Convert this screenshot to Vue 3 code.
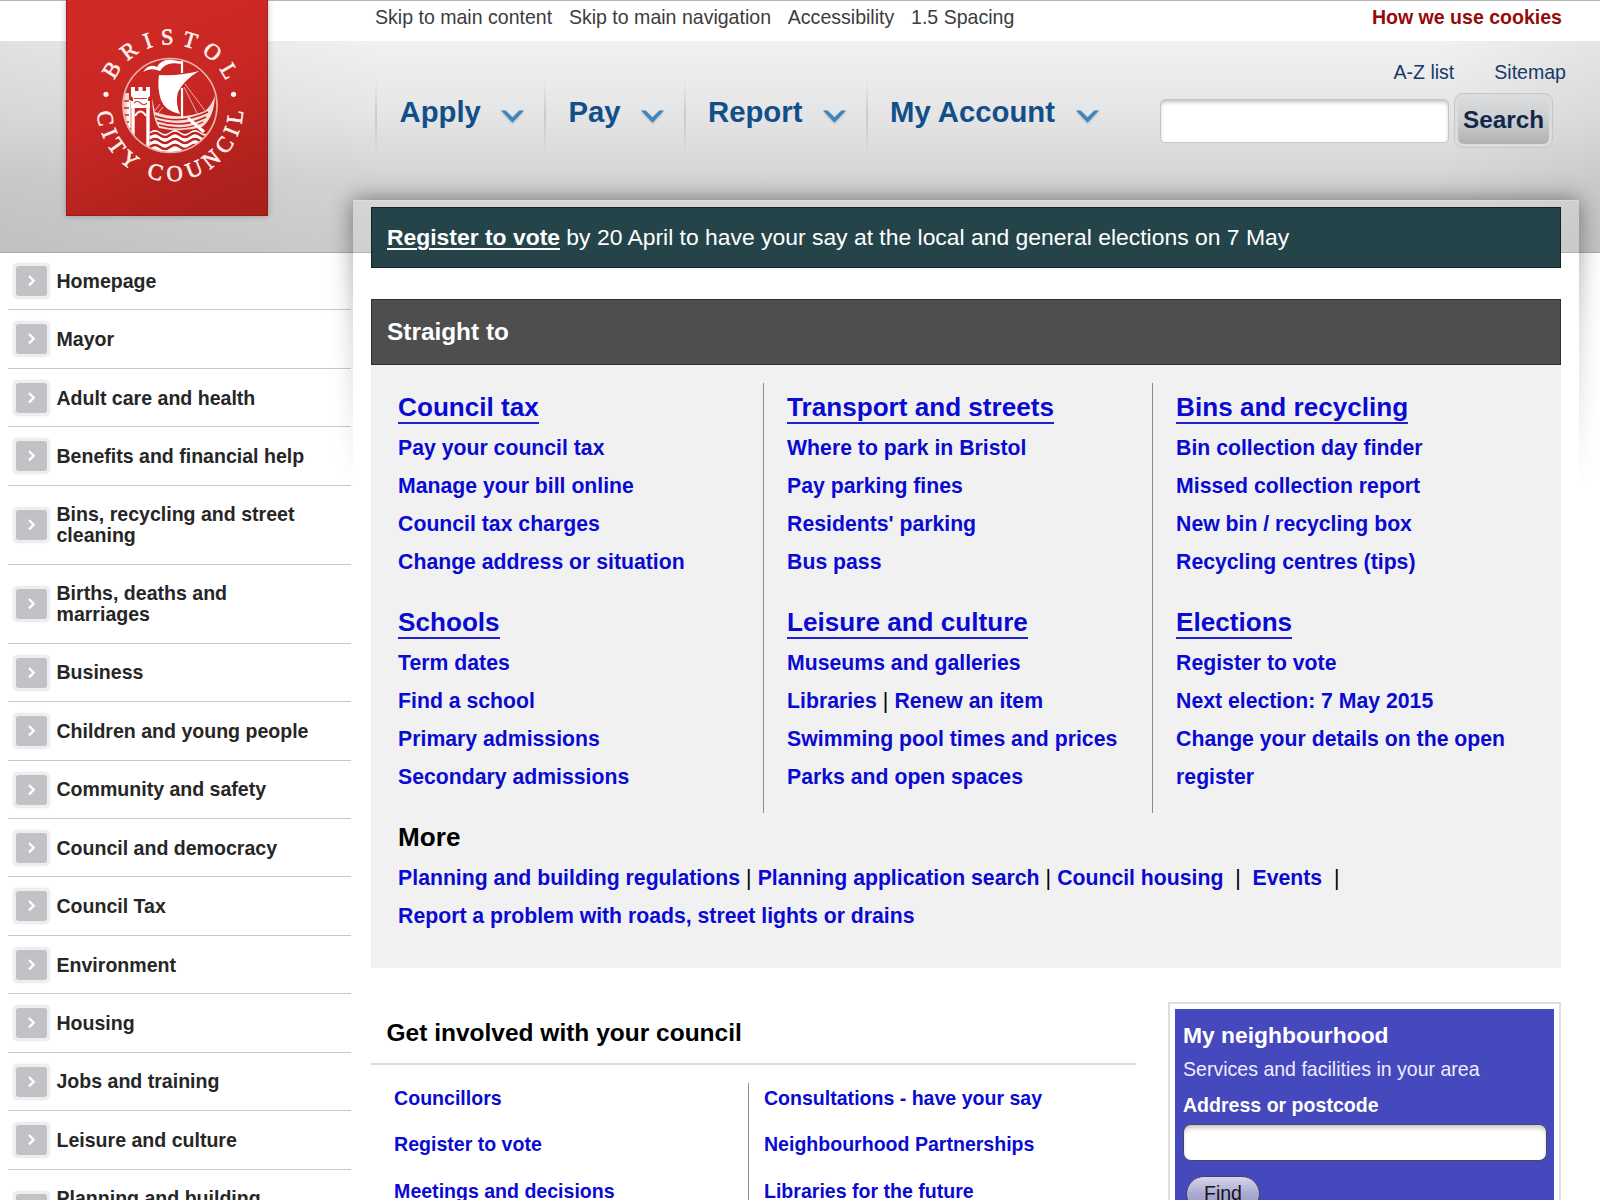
<script setup>
const skipLinks = ['Skip to main content', 'Skip to main navigation', 'Accessibility', '1.5 Spacing']

const tabs = [
  { label: 'Apply', width: 169 },
  { label: 'Pay', width: 139.5 },
  { label: 'Report', width: 182 },
  { label: 'My Account', width: 253.5 },
]

const sections = [
  ['Homepage'],
  ['Mayor'],
  ['Adult care and health'],
  ['Benefits and financial help'],
  ['Bins, recycling and street', 'cleaning'],
  ['Births, deaths and', 'marriages'],
  ['Business'],
  ['Children and young people'],
  ['Community and safety'],
  ['Council and democracy'],
  ['Council Tax'],
  ['Environment'],
  ['Housing'],
  ['Jobs and training'],
  ['Leisure and culture'],
  ['Planning and building', 'regulations'],
]

const columns = [
  [
    { title: 'Council tax', rows: [['Pay your council tax'], ['Manage your bill online'], ['Council tax charges'], ['Change address or situation']] },
    { title: 'Schools', rows: [['Term dates'], ['Find a school'], ['Primary admissions'], ['Secondary admissions']] },
  ],
  [
    { title: 'Transport and streets', rows: [['Where to park in Bristol'], ['Pay parking fines'], ["Residents' parking"], ['Bus pass']] },
    { title: 'Leisure and culture', rows: [['Museums and galleries'], ['Libraries', 'Renew an item'], ['Swimming pool times and prices'], ['Parks and open spaces']] },
  ],
  [
    { title: 'Bins and recycling', rows: [['Bin collection day finder'], ['Missed collection report'], ['New bin / recycling box'], ['Recycling centres (tips)']] },
    { title: 'Elections', rows: [['Register to vote'], ['Next election: 7 May 2015'], ['Change your details on the open register']] },
  ],
]

const involved = [
  ['Councillors', 'Register to vote', 'Meetings and decisions'],
  ['Consultations - have your say', 'Neighbourhood Partnerships', 'Libraries for the future'],
]
</script>

<template>
  <div class="page">
    <header class="header">
      <div class="topbar">
        <nav class="skip">
          <a v-for="s in skipLinks" :key="s">{{ s }}</a>
        </nav>
        <a class="cookies">How we use cookies</a>
      </div>
      <div class="masthead">
        <nav class="tabs">
          <a v-for="t in tabs" :key="t.label" class="tab" :style="{ width: t.width + 'px' }">
            <span>{{ t.label }}</span>
            <svg class="chev" width="27" height="18" viewBox="0 0 27 18">
              <path d="M2 2.500H6.600L13.500 9.300L20.400 2.500H25L13.500 14.800Z" fill="#3d86c0" />
            </svg>
          </a>
        </nav>
        <div class="tools">
          <div class="meta"><a>A-Z list</a><a>Sitemap</a></div>
          <form class="search" @submit.prevent>
            <input type="text" aria-label="Search text" />
            <button type="submit"><span>Search</span></button>
          </form>
        </div>
      </div>
      <a class="logo">
        <svg width="202" height="216" viewBox="66 0 202 216">
          <defs>
            <linearGradient id="red" x1="0.3" y1="0" x2="0.7" y2="1">
              <stop offset="0" stop-color="#d02a26" />
              <stop offset="0.45" stop-color="#c82724" />
              <stop offset="1" stop-color="#aa201b" />
            </linearGradient>
            <path id="arcTop" d="M109 105.500A61 61 0 0 1 231 105.500" />
            <path id="arcBottom" d="M97 108A73 73 0 0 0 243 108" />
            <clipPath id="disc"><circle cx="170" cy="105.500" r="46.500" /></clipPath>
          </defs>
          <rect x="66" y="0" width="202" height="216" fill="url(#red)" />
          <path d="M66.500 0V215.500H267.500V0" fill="none" stroke="#8e1512" stroke-opacity="0.6" />
          <g fill="#fff2ef" font-family="'Liberation Serif', serif" font-size="22.500" stroke="#fff2ef" stroke-width="0.600">
            <text><textPath href="#arcTop" startOffset="26" textLength="140">BRISTOL</textPath></text>
            <text><textPath href="#arcBottom" startOffset="4" textLength="222">CITY COUNCIL</textPath></text>
          </g>
          <circle cx="106" cy="94.300" r="2.600" fill="#fff2ef" />
          <circle cx="233.500" cy="94.300" r="2.600" fill="#fff2ef" />
          <g clip-path="url(#disc)">
            <path d="M123 93H129V146H123Z" fill="#f5d5d0" />
            <path d="M131 87h4v4h3.500v-4h4v4h3.500v-4h4v9l-2 2v3h2v7h-19v-7h2v-3l-2-2z" fill="#fff" />
            <path d="M134 98.500H147M134 103q3-3.500 6.500 0t6.500 0" fill="none" stroke="#cf4640" stroke-width="1.200" />
            <path d="M133 107V148M148 107V150M129 100V140" stroke="#fff" stroke-width="3.400" />
            <path d="M135 116q5.500-9 11 0" fill="none" stroke="#fff" stroke-width="2" />
            <path d="M123 101H129M123 108H129M123 115H129M123 122H129M123 129H131" stroke="#c52622" stroke-width="1.300" />
            <path d="M150 132q5-4 10 0t10 0 10 0 10 0 10 0 10 0 10 0V156H150Z" fill="#fff" />
            <path v-for="y in [135, 141, 147]" :key="y" :d="`M150 ${y}q5-4 10 0t10 0 10 0 10 0 10 0 10 0`" fill="none" stroke="#bd2420" stroke-width="2.300" />
            <path d="M152 98Q153 120 159 128Q182 133 202 127Q214 118 215 96Q211 106 205 111Q180 121 155 112Z" fill="#f7dcd8" />
            <path d="M155 116Q180 125 208 112M157 120.500Q182 129 206 117M159 125Q184 132 203 122" fill="none" stroke="#c02520" stroke-width="1.400" />
          </g>
          <path d="M159 75Q181 76 199 71Q184 80 178 92Q175 103 180 114Q165 111 161 100Q157 88 159 75Z" fill="#fff" />
          <path d="M143 72Q149 63 157 67Q161 59.500 170 59.500L181 61.500V64Q166 60.500 160 71Q150 67 143 72Z" fill="#fff" />
          <path d="M182 61V73M182 88V118" stroke="#fff" stroke-width="2.200" />
          <path d="M185 84L206 112M184 87L198 115M160 104L154 112M163 107L158 113" stroke="#eea9a3" stroke-width="1" />
          <path d="M188 118L204 132" stroke="#fff" stroke-width="3" />
          <circle cx="170" cy="105.500" r="47" fill="none" stroke="#eeb3ad" stroke-width="1.700" />
        </svg>
      </a>
    </header>

    <div class="body">
      <aside class="sidebar">
        <a v-for="(s, i) in sections" :key="i" class="side-item">
          <span class="side-icon">
            <svg width="31" height="30" viewBox="0 0 31 30">
              <path d="M13 10l4.700 4.700L13 19.400" fill="none" stroke="#fff" stroke-width="2.300" />
            </svg>
          </span>
          <span class="side-text"><span v-for="l in s" :key="l">{{ l }}</span></span>
        </a>
      </aside>

      <main class="panel">
        <div class="shade"></div>
        <div class="veil"></div>
        <div class="banner"><p><b>Register to vote</b> by 20 April to have your say at the local and general elections on 7 May</p></div>

        <section class="straight">
          <h2>Straight to</h2>
          <div class="straight-body">
            <div class="cols">
              <div v-for="(col, c) in columns" :key="c" class="col">
                <div v-for="g in col" :key="g.title" class="group">
                  <h3><a>{{ g.title }}</a></h3>
                  <p v-for="(row, r) in g.rows" :key="r">
                    <template v-for="(l, k) in row" :key="l"><i v-if="k">|</i><a>{{ l }}</a></template>
                  </p>
                </div>
              </div>
            </div>
            <div class="more">
              <h3>More</h3>
              <p>
                <a>Planning and building regulations</a><i>|</i><a>Planning application search</a><i>|</i><a>Council housing</a><i class="wide">|</i><a>Events</a><i class="wide">|</i>
              </p>
              <p><a>Report a problem with roads, street lights or drains</a></p>
            </div>
          </div>
        </section>

        <div class="lower">
          <section class="involved">
            <h2>Get involved with your council</h2>
            <div class="inv-cols">
              <div v-for="(col, c) in involved" :key="c" class="inv-col">
                <a v-for="l in col" :key="l">{{ l }}</a>
              </div>
            </div>
          </section>
          <section class="hood">
            <div class="hood-inner">
              <h2>My neighbourhood</h2>
              <p>Services and facilities in your area</p>
              <label for="postcode">Address or postcode</label>
              <input id="postcode" type="text" />
              <button type="button">Find</button>
            </div>
          </section>
        </div>
      </main>
    </div>
  </div>
</template>

<style>
body {
  overflow: hidden;
  background: #fff;
}
</style>

<style scoped>
* {
  box-sizing: border-box;
  margin: 0;
}
.page {
  width: 1600px;
  height: 1200px;
  overflow: hidden;
  font: 19.56px 'Liberation Sans', Arial, sans-serif;
  color: #000;
}
a {
  white-space: nowrap;
}

/* header */
.header {
  position: relative;
  height: 253px;
  border-top: 1px solid #b5b5b5;
}
.topbar {
  display: flex;
  justify-content: space-between;
  height: 40px;
  padding: 5px 38px 0 375px;
  line-height: 22px;
  color: #3c3c3c;
}
.skip {
  display: flex;
  gap: 16.8px;
}
.cookies {
  font-weight: bold;
  color: #960a0a;
}
.masthead {
  display: flex;
  justify-content: space-between;
  height: 212px;
  border-bottom: 1px solid #ababab;
  background:
    linear-gradient(90deg, rgba(120, 120, 120, 0.13), rgba(120, 120, 120, 0) 24%, rgba(120, 120, 120, 0) 90%, rgba(120, 120, 120, 0.1)),
    linear-gradient(#f1f1f1, #e5e5e5 35%, #d4d4d4 65%, #cbcbcb);
}
.tabs {
  display: flex;
  height: 74px;
  margin: 39px 0 0 375px;
}
.tab {
  display: flex;
  justify-content: space-between;
  align-items: center;
  padding: 0 18px 10px 22.5px;
  font-size: 29.3px;
  font-weight: bold;
  color: #114f8a;
  border-left: 2px solid;
  border-image: linear-gradient(rgba(170, 170, 170, 0), rgba(170, 170, 170, 0.45), rgba(170, 170, 170, 0)) 1;
}
.chev {
  margin-top: 9px;
  filter: drop-shadow(0 1px 1px rgba(0, 0, 0, 0.2));
}
.tools {
  display: flex;
  flex-direction: column;
  width: 440px;
  padding-top: 20px;
}
.meta {
  display: flex;
  justify-content: flex-end;
  gap: 40px;
  padding-right: 34px;
  line-height: 22px;
  color: #173a6b;
}
.search {
  display: flex;
  align-items: flex-start;
  gap: 5px;
  margin-top: 10px;
}
.search input {
  width: 289px;
  height: 44px;
  margin-top: 6px;
  border: 1px solid #c4c4c4;
  border-radius: 5px;
  background: #fff;
  box-shadow: inset 0 3px 4px -1px #bdbdbd;
}
.search button {
  width: 99px;
  height: 55px;
  padding: 4px 3px;
  border: 1px solid #c6c6c6;
  border-radius: 9px;
  background: #dcdcdc;
}
.search button span {
  display: block;
  height: 46px;
  border-radius: 6px;
  background: linear-gradient(#d9dadb, #cdcfd0 45%, #b0b2b4);
  font: bold 24.3px/44px 'Liberation Sans', Arial, sans-serif;
  color: #12284b;
}
.logo {
  position: absolute;
  left: 66px;
  top: -1px;
  height: 216px;
  box-shadow: 0 0 6px rgba(0, 0, 0, 0.25);
}
.logo svg {
  display: block;
}

/* body */
.body {
  display: flex;
}
.sidebar {
  width: 343px;
  margin: -1px 2px 0 8px;
}
.side-item {
  display: flex;
  align-items: center;
  padding: 18.7px 0 18.15px 5px;
  border-bottom: 1px solid #c8c8c8;
  font-weight: bold;
  line-height: 20.6px;
  color: #262626;
}
.side-icon {
  flex: none;
  width: 37px;
  height: 36px;
  margin: -8px 6.5px -8px 0;
  padding: 3px;
  border-radius: 5px;
  background: #eeeeef;
  box-shadow: 0 0 2px #e6e6e6;
}
.side-icon svg {
  display: block;
  border-radius: 3px;
  background: #c1c2c5;
}
.side-text span {
  display: block;
}
.panel {
  position: relative;
  width: 1226px;
  height: 1000px;
  margin-top: -53px;
  padding: 7px 18px 0 17.5px;
}
.shade {
  position: absolute;
  inset: -40px -40px auto;
  height: 330px;
  overflow: hidden;
  mask: linear-gradient(#000 15%, rgba(0, 0, 0, 0.45) 50%, transparent);
}
.shade::before {
  content: '';
  position: absolute;
  inset: 40px 40px -100px;
  box-shadow: 0 0 22px rgba(0, 0, 0, 0.48);
}
.veil {
  position: absolute;
  inset: 0 0 auto;
  height: 53px;
  background: rgba(255, 255, 255, 0.1);
  border-top: 1px solid rgba(255, 255, 255, 0.2);
}
.banner {
  position: relative;
  height: 61px;
  padding-left: 15.5px;
  border: 1px solid #112327;
  background: #24444a;
  color: #fff;
  font-size: 22.9px;
  line-height: 58px;
}
.banner b {
  text-decoration: underline;
  text-decoration-thickness: 2px;
  text-underline-offset: 3px;
}
.straight {
  position: relative;
  margin-top: 31px;
  background: #f1f1f1;
}
.straight h2 {
  height: 66px;
  padding-left: 15.5px;
  background: #4e4e4e;
  border: 1px solid #2f2f2f;
  color: #fff;
  font-size: 24.4px;
  line-height: 64px;
}
.straight-body {
  height: 603px;
  padding: 18px 0 0 4px;
}
.cols {
  display: flex;
}
.col {
  width: 389px;
  height: 430px;
  padding-left: 23.6px;
}
.col + .col {
  box-shadow: -1px 0 #8b8b8b;
}
.group {
  height: 215px;
}
h3 {
  height: 46px;
  padding-top: 8.5px;
  font-size: 26.1px;
  line-height: 30px;
}
h3 a {
  display: inline-block;
  height: 32px;
  border-bottom: 2px solid #2020d0;
}
.group a,
.more a,
.inv-col a {
  color: #0a0ad2;
}
.group p,
.more p {
  font-size: 21.23px;
  font-weight: bold;
  line-height: 38px;
}
.group p a {
  white-space: normal;
}
i {
  margin: 0 6.1px;
  font-style: normal;
  font-weight: normal;
}
i.wide {
  margin: 0 11.8px;
}
.more {
  padding-left: 23.6px;
}
.lower {
  display: flex;
  justify-content: space-between;
}
.involved {
  width: 765px;
  padding-top: 34px;
}
.involved h2 {
  height: 63px;
  padding-left: 16px;
  border-bottom: 2px solid #dcdcdc;
  font-size: 24.5px;
  line-height: 62px;
}
.inv-cols {
  display: flex;
  margin-top: 18px;
}
.inv-col {
  display: flex;
  flex-direction: column;
  width: 377px;
  height: 150px;
  padding-left: 23.6px;
  font-weight: bold;
  line-height: 46.3px;
}
.inv-col a:first-child {
  margin-top: -8px;
}
.inv-col + .inv-col {
  padding-left: 15.5px;
  border-left: 1.5px solid #8f8f8f;
}
.hood {
  width: 393px;
  height: 260px;
  margin-top: 34px;
  padding: 5px;
  border: 2px solid #dedede;
}
.hood-inner {
  height: 240px;
  padding: 11px 7px 0 8px;
  background: #4648bd;
  color: #fff;
}
.hood-inner h2 {
  font-size: 22.85px;
  line-height: 30px;
}
.hood-inner p {
  margin-top: 8px;
  line-height: 22px;
  color: #eef;
}
.hood-inner label {
  display: block;
  margin-top: 13.5px;
  font-weight: bold;
  line-height: 22px;
}
.hood-inner input {
  display: block;
  width: 364px;
  height: 37px;
  margin-top: 8px;
  border: 1.5px solid #47475c;
  border-radius: 8px;
  background: #fff;
  box-shadow: inset 0 4px 4px -1px #c9c6c6;
}
.hood-inner button {
  display: block;
  width: 74px;
  height: 36px;
  margin: 15px 0 0 3px;
  padding: 0;
  border: 1.5px solid #47475c;
  border-radius: 18px;
  background: linear-gradient(#d6d6ef, #a9a9cf 50%, #9696c4);
  font: 19.5px/33px 'Liberation Sans', Arial, sans-serif;
  color: #141420;
}
</style>
